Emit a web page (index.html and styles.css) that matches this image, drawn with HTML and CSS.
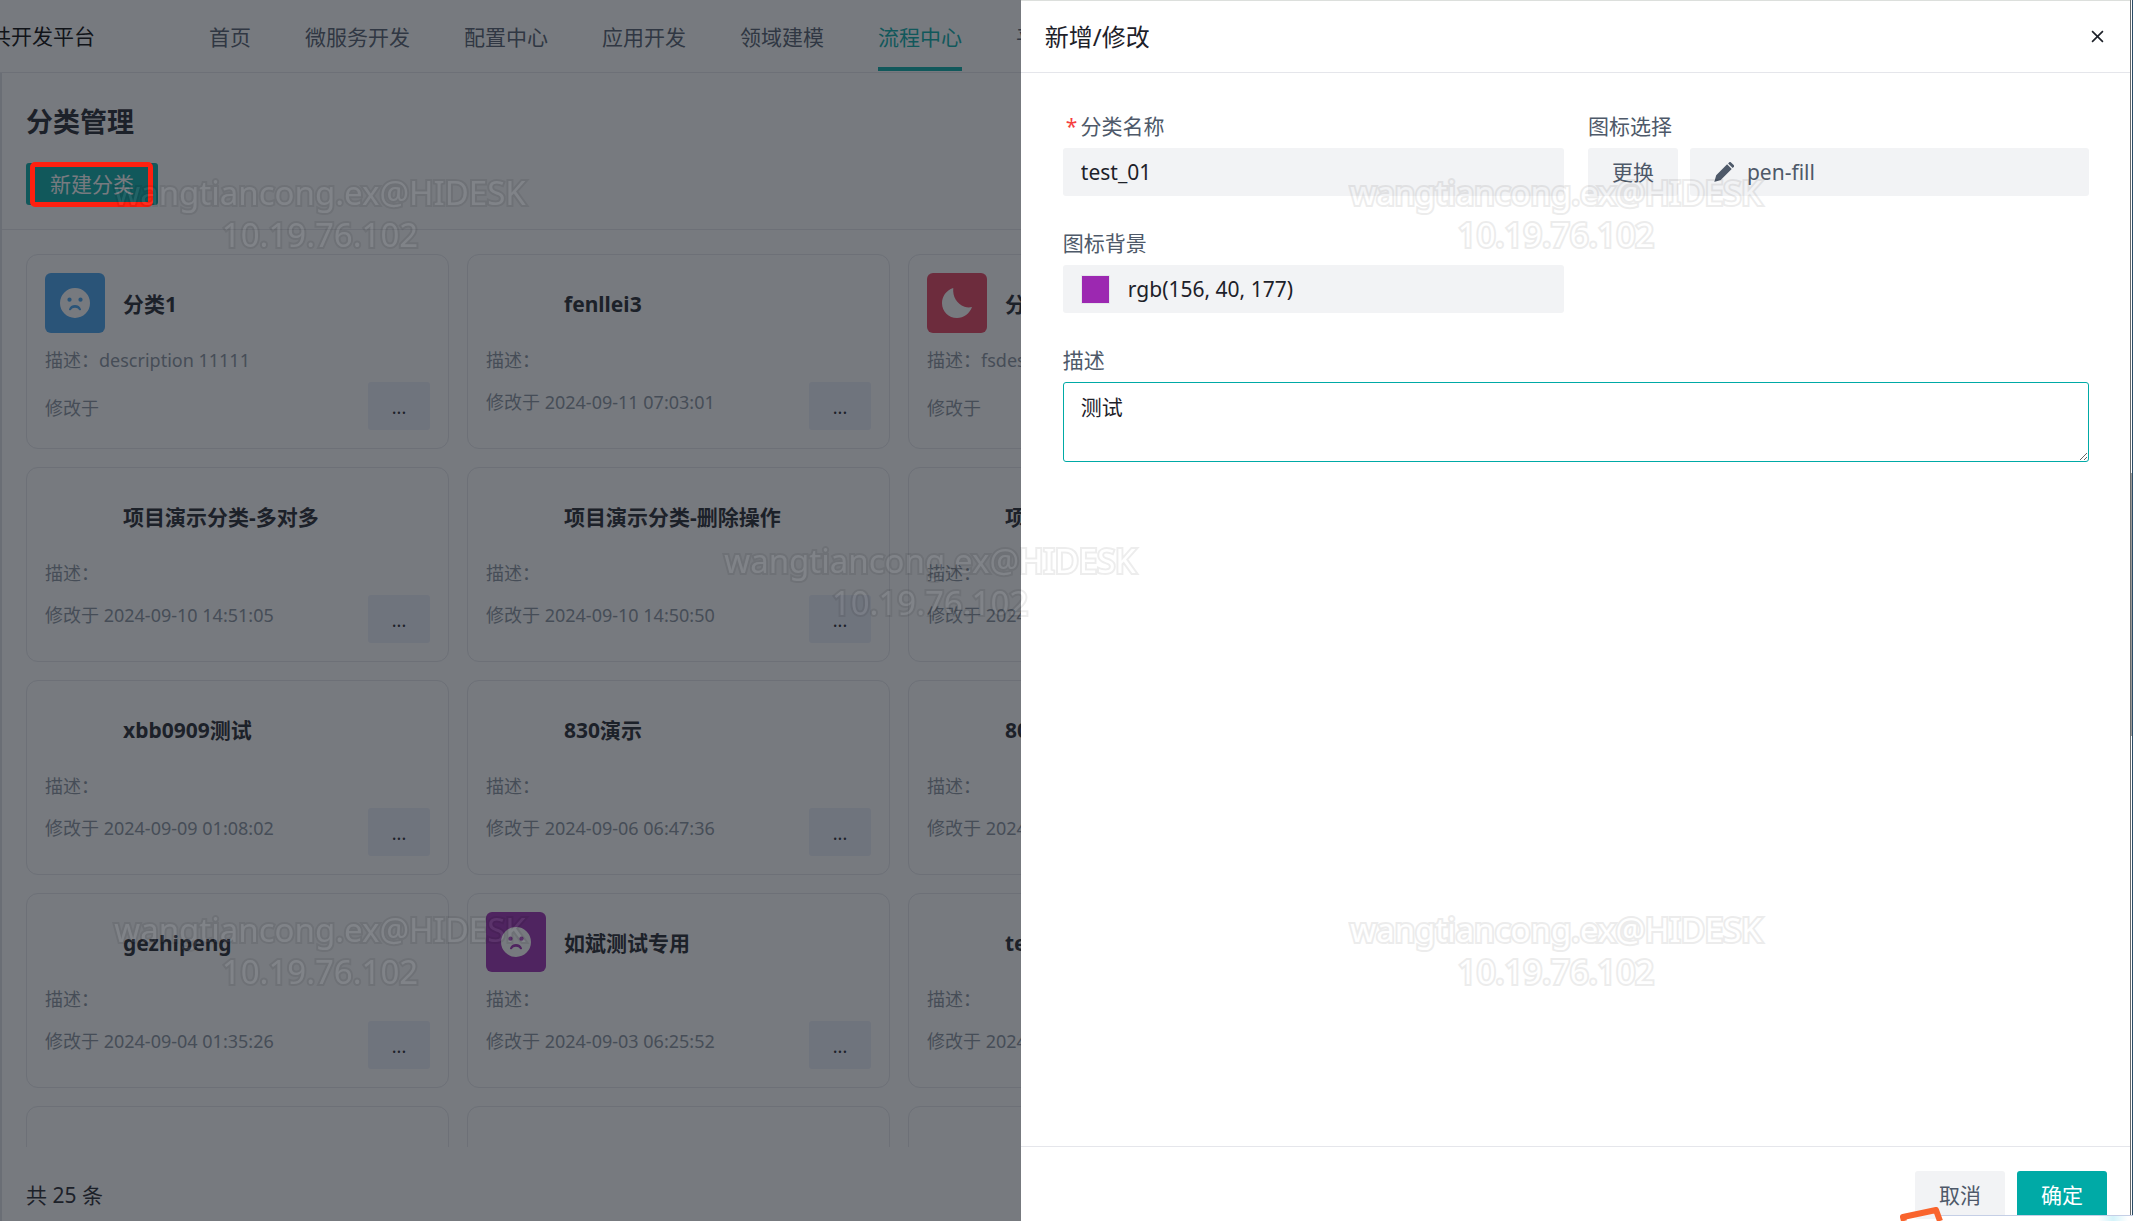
FILE: index.html
```html
<!DOCTYPE html>
<html lang="zh-CN">
<head>
<meta charset="utf-8">
<meta name="viewport" content="width=device-width, initial-scale=1">
<title>分类管理</title>
<link rel="stylesheet" href="styles.css">
</head>
<body>
<svg class="sprite" aria-hidden="true">
  <symbol id="frown" viewBox="0 0 24 24">
    <path fill-rule="evenodd" d="M12 0a12 12 0 1 0 0 24 12 12 0 0 0 0-24ZM7.600 7.600a1.700 1.700 0 1 1 0 3.400 1.700 1.700 0 0 1 0-3.400Zm8.800 0a1.700 1.700 0 1 1 0 3.400 1.700 1.700 0 0 1 0-3.400ZM7.200 17c.6-2.300 2.500-3.500 4.800-3.500s4.200 1.200 4.800 3.500c.2.800-1 1.200-1.500.5-.8-1.100-1.800-1.700-3.300-1.700s-2.500.6-3.300 1.700c-.5.700-1.700.3-1.500-.5Z"/>
  </symbol>
  <symbol id="moon" viewBox="0 0 28 28">
    <path d="M10.500 0C3.600 2.400 0 8 0 14.200 0 22 6.200 28 14 28c6.300 0 11.600-3.800 14-10.200-2.400.6-4.700.5-7-.3C13.700 14.800 9.800 8.200 10.500 0Z"/>
  </symbol>
  <symbol id="pen" viewBox="0 0 20 20">
    <path d="M13.100 2.300l4.600 4.600L6.700 17.900 0.300 19.900 2.200 13.300ZM14.100 1.400l1-1a1.300 1.300 0 0 1 1.900 0l2.700 2.700a1.300 1.300 0 0 1 0 1.900l-1 1Z"/>
  </symbol>
</svg>

<div class="app">
  <header class="topbar">
    <span class="brand">共开发平台</span>
    <nav class="nav">
      <a href="#">首页</a>
      <a href="#">微服务开发</a>
      <a href="#">配置中心</a>
      <a href="#">应用开发</a>
      <a href="#">领域建模</a>
      <a href="#" class="active" aria-current="page">流程中心</a>
      <a href="#">平台</a>
    </nav>
  </header>

  <main class="content">
    <div class="heading">
      <h1>分类管理</h1>
      <button type="button" class="btn btn-primary">新建分类</button>
    </div>
    <div class="list">
      <article class="card">
        <div class="card-head"><span class="tile blue"><svg><use href="#frown"/></svg></span><h2>分类1</h2></div>
        <p>描述：description 11111</p>
        <div class="card-foot undated"><span>修改于</span><button type="button" class="more">...</button></div>
      </article>
      <article class="card">
        <div class="card-head"><span class="tile"></span><h2>fenllei3</h2></div>
        <p>描述：</p>
        <div class="card-foot"><span>修改于 2024-09-11 07:03:01</span><button type="button" class="more">...</button></div>
      </article>
      <article class="card">
        <div class="card-head"><span class="tile red"><svg><use href="#moon"/></svg></span><h2>分类</h2></div>
        <p>描述：fsdes</p>
        <div class="card-foot undated"><span>修改于</span><button type="button" class="more">...</button></div>
      </article>
      <article class="card">
        <div class="card-head"><span class="tile"></span><h2>项目演示分类-多对多</h2></div>
        <p>描述：</p>
        <div class="card-foot"><span>修改于 2024-09-10 14:51:05</span><button type="button" class="more">...</button></div>
      </article>
      <article class="card">
        <div class="card-head"><span class="tile"></span><h2>项目演示分类-删除操作</h2></div>
        <p>描述：</p>
        <div class="card-foot"><span>修改于 2024-09-10 14:50:50</span><button type="button" class="more">...</button></div>
      </article>
      <article class="card">
        <div class="card-head"><span class="tile"></span><h2>项目</h2></div>
        <p>描述：</p>
        <div class="card-foot"><span>修改于 2024</span><button type="button" class="more">...</button></div>
      </article>
      <article class="card">
        <div class="card-head"><span class="tile"></span><h2>xbb0909测试</h2></div>
        <p>描述：</p>
        <div class="card-foot"><span>修改于 2024-09-09 01:08:02</span><button type="button" class="more">...</button></div>
      </article>
      <article class="card">
        <div class="card-head"><span class="tile"></span><h2>830演示</h2></div>
        <p>描述：</p>
        <div class="card-foot"><span>修改于 2024-09-06 06:47:36</span><button type="button" class="more">...</button></div>
      </article>
      <article class="card">
        <div class="card-head"><span class="tile"></span><h2>80</h2></div>
        <p>描述：</p>
        <div class="card-foot"><span>修改于 2024</span><button type="button" class="more">...</button></div>
      </article>
      <article class="card">
        <div class="card-head"><span class="tile"></span><h2>gezhipeng</h2></div>
        <p>描述：</p>
        <div class="card-foot"><span>修改于 2024-09-04 01:35:26</span><button type="button" class="more">...</button></div>
      </article>
      <article class="card">
        <div class="card-head"><span class="tile purple"><svg><use href="#frown"/></svg></span><h2>如斌测试专用</h2></div>
        <p>描述：</p>
        <div class="card-foot"><span>修改于 2024-09-03 06:25:52</span><button type="button" class="more">...</button></div>
      </article>
      <article class="card">
        <div class="card-head"><span class="tile"></span><h2>te</h2></div>
        <p>描述：</p>
        <div class="card-foot"><span>修改于 2024</span><button type="button" class="more">...</button></div>
      </article>
      <article class="card"></article>
      <article class="card"></article>
      <article class="card"></article>
    </div>
    <div class="total">共 25 条</div>
  </main>
</div>

<div class="mask"></div>
<div class="highlight"></div>

<section class="drawer" role="dialog" aria-labelledby="drawer-title">
  <header class="drawer-head">
    <h2 id="drawer-title">新增/修改</h2>
    <button type="button" class="close" aria-label="关闭"><svg viewBox="0 0 12 12"><path d="M1 1l10 10M11 1L1 11"/></svg></button>
  </header>
  <form class="form">
    <div class="field">
      <label for="name"><span class="star">*</span>分类名称</label>
      <input id="name" class="box" type="text" value="test_01">
    </div>
    <div class="field">
      <label for="icon">图标选择</label>
      <div class="picker">
        <button type="button" id="icon" class="btn">更换</button>
        <span class="box icon-box"><svg><use href="#pen"/></svg>pen-fill</span>
      </div>
    </div>
    <div class="field">
      <label for="color">图标背景</label>
      <div class="box color-box"><span class="swatch"></span><input id="color" type="text" value="rgb(156, 40, 177)"></div>
    </div>
    <div class="field wide">
      <label for="desc">描述</label>
      <textarea id="desc">测试</textarea>
    </div>
  </form>
  <footer class="drawer-foot">
    <button type="button" class="btn">取消</button>
    <button type="button" class="btn btn-primary">确定</button>
  </footer>
</section>

<div class="edge"></div>
<div class="popup"></div>
<svg class="popup-logo" viewBox="0 0 46 14" aria-hidden="true"><path d="M4 14L3 10 36 3l4 11" fill="none" stroke="#f9642d" stroke-width="6" stroke-linejoin="round"/></svg>

<div class="watermark wm-left wm-top">wangtiancong.ex@HIDESK<br>10.19.76.102</div>
<div class="watermark wm-right wm-top">wangtiancong.ex@HIDESK<br>10.19.76.102</div>
<div class="watermark wm-center wm-middle">wangtiancong.ex@HIDESK<br>10.19.76.102</div>
<div class="watermark wm-left wm-bottom">wangtiancong.ex@HIDESK<br>10.19.76.102</div>
<div class="watermark wm-right wm-bottom">wangtiancong.ex@HIDESK<br>10.19.76.102</div>
</body>
</html>
```
FILE: styles.css
```css
:root {
  --text-1: #1d2129;
  --text-2: #4e5969;
  --text-3: #86909c;
  --border: #e5e6eb;
  --fill: #f2f3f5;
  --primary: #00aaa6;
}

* { box-sizing: border-box; }

body {
  margin: 0;
  overflow: hidden;
  font: 21px/32px "Noto Sans", "Noto Sans CJK SC", sans-serif;
  color: var(--text-1);
  background: #fff;
}

h1, h2, p { margin: 0; }

button, input, textarea { font: inherit; color: inherit; }

.sprite { position: absolute; width: 0; height: 0; }

.app {
  display: flex;
  flex-direction: column;
  height: 100vh;
}

/* top navigation */
.topbar {
  display: flex;
  flex: none;
  height: 73px;
  border-bottom: 1px solid var(--border);
  white-space: nowrap;
}

.brand {
  margin: 0 114px 0 -10px;
  line-height: 73px;
  color: #000;
}

.nav { display: flex; gap: 54px; }

.nav a {
  height: 71px;
  line-height: 75px;
  color: var(--text-2);
  text-decoration: none;
}

.nav .active {
  color: var(--primary);
  border-bottom: 4px solid var(--primary);
}

/* page content */
.content {
  display: flex;
  flex: 1;
  flex-direction: column;
  min-height: 0;
  border-left: 2px solid #dfe0e6;
}

.heading {
  padding: 29px 24px 24px;
  border-bottom: 1px solid var(--border);
}

.heading h1 {
  margin-bottom: 21px;
  font-size: 27px;
  line-height: 40px;
}

.btn {
  height: 48px;
  padding: 0 24px;
  border: 0;
  border-radius: 3px;
  background: var(--fill);
  color: var(--text-2);
  white-space: nowrap;
}

.btn-primary { background: var(--primary); color: #fff; }

.heading .btn { display: block; height: 42px; }

.list {
  display: grid;
  flex: 1;
  grid-template-columns: repeat(3, 423px);
  grid-auto-rows: 195px;
  gap: 18px;
  min-height: 0;
  padding: 24px;
  overflow: hidden;
}

.card {
  padding: 18px;
  border: 1px solid var(--border);
  border-radius: 12px;
  font-size: 18px;
  line-height: 27px;
  color: var(--text-3);
  white-space: nowrap;
}

.card-head {
  display: flex;
  align-items: center;
  gap: 18px;
}

.card h2 { padding-top: 2px; font-size: 21px; color: var(--text-1); }

.tile {
  display: grid;
  place-items: center;
  width: 60px;
  height: 60px;
  border-radius: 6px;
}

.tile svg { width: 30px; height: 30px; fill: #fff; }

.blue { background: #40a0ee; }
.red { background: #e73c5b; }
.purple { background: #9c28b1; }

.card p { padding: 14px 0 8px; }

.card-foot {
  display: flex;
  justify-content: space-between;
  align-items: flex-start;
}

.card-foot span { padding-top: 7px; }
.undated span { padding-top: 13px; }

.more {
  width: 62px;
  height: 48px;
  padding-top: 4px;
  border: 0;
  border-radius: 3px;
  background: #ecf0fa;
  color: var(--text-1);
}

.total {
  flex: none;
  height: 74px;
  padding: 0 24px;
  line-height: 96px;
}

.mask {
  position: fixed;
  inset: 0;
  background: rgba(29, 33, 41, .6);
}

.highlight {
  position: absolute;
  top: 162px;
  left: 30px;
  width: 123px;
  height: 45px;
  border: 5px solid #ff2010;
  border-radius: 5px;
}

/* drawer */
.drawer {
  position: fixed;
  inset: 0 2px 0 auto;
  display: flex;
  flex-direction: column;
  width: calc(52vw + 1px);
  border-top: 1px solid #dcdfdc;
  background: #fff;
}

.drawer-head {
  display: flex;
  justify-content: space-between;
  align-items: center;
  height: 72px;
  padding: 0 24px;
  border-bottom: 1px solid var(--border);
}

.drawer-head h2 { font-size: 24px; font-weight: 400; }

.close {
  display: flex;
  padding: 3px;
  border: 0;
  background: none;
}

.close svg {
  width: 13px;
  height: 13px;
  fill: none;
  stroke: var(--text-1);
  stroke-width: 1.500;
}

.form {
  display: grid;
  flex: 1;
  grid-template-columns: 1fr 1fr;
  align-content: start;
  gap: 31px 24px;
  padding: 37px 42px;
}

.field { display: flex; flex-direction: column; gap: 6px; color: var(--text-2); }
.wide { grid-column: 1 / -1; }

.field label { display: flex; }
.star { padding: 0 3px; color: #f53f3f; }

.box {
  display: flex;
  align-items: center;
  width: 100%;
  height: 48px;
  padding: 0 18px;
  border: 0;
  border-radius: 3px;
  background: var(--fill);
}

input, textarea { color: var(--text-1); }

.picker { display: flex; gap: 12px; }

.icon-box { flex: 1; padding: 0 24px; gap: 13px; }
.icon-box svg { width: 20px; height: 20px; fill: var(--text-2); }

.color-box { gap: 18px; }

.color-box input {
  flex: 1;
  min-width: 0;
  padding: 0;
  border: 0;
  background: none;
}

.swatch {
  width: 29px;
  height: 29px;
  border: 1px solid var(--border);
  background: #9c28b1;
}

textarea {
  display: block;
  width: 100%;
  height: 80px;
  padding: 8px 17px;
  border: 1px solid var(--primary);
  border-radius: 3px;
  outline: 0;
  background: #fff;
}

.drawer-foot {
  display: flex;
  justify-content: flex-end;
  gap: 12px;
  height: 75px;
  padding: 24px;
  border-top: 1px solid var(--border);
}

/* scroll track and neighbouring windows at the edges of the desktop */
.edge {
  position: fixed;
  inset: 0 0 0 auto;
  width: 3px;
  border: solid #666a6c;
  border-width: 0 1px;
  border-right-color: #2c4c66;
  background: linear-gradient(#fff 473px, #9c9a98 473px 736px, #fff 736px);
}

.popup {
  position: fixed;
  right: 0;
  bottom: 0;
  width: 195px;
  height: 6px;
  border-top: 1px solid #c5cfe6;
  background: #fff linear-gradient(90deg, transparent, #d4f3fa, transparent) 160px 0 / 30px 6px no-repeat;
}

.popup-logo {
  position: fixed;
  right: 187px;
  bottom: 0;
  width: 46px;
  height: 14px;
}

/* watermark */
.watermark {
  position: fixed;
  width: 420px;
  font-size: 33px;
  line-height: 42px;
  text-align: center;
  white-space: nowrap;
  color: #fff;
  -webkit-text-stroke: 4px #000;
  paint-order: stroke fill;
  opacity: .07;
  pointer-events: none;
}

.wm-left { left: 110px; }
.wm-center { left: 720px; }
.wm-right { left: 1346px; }
.wm-top { top: 172px; }
.wm-middle { top: 540px; }
.wm-bottom { top: 909px; }
```
